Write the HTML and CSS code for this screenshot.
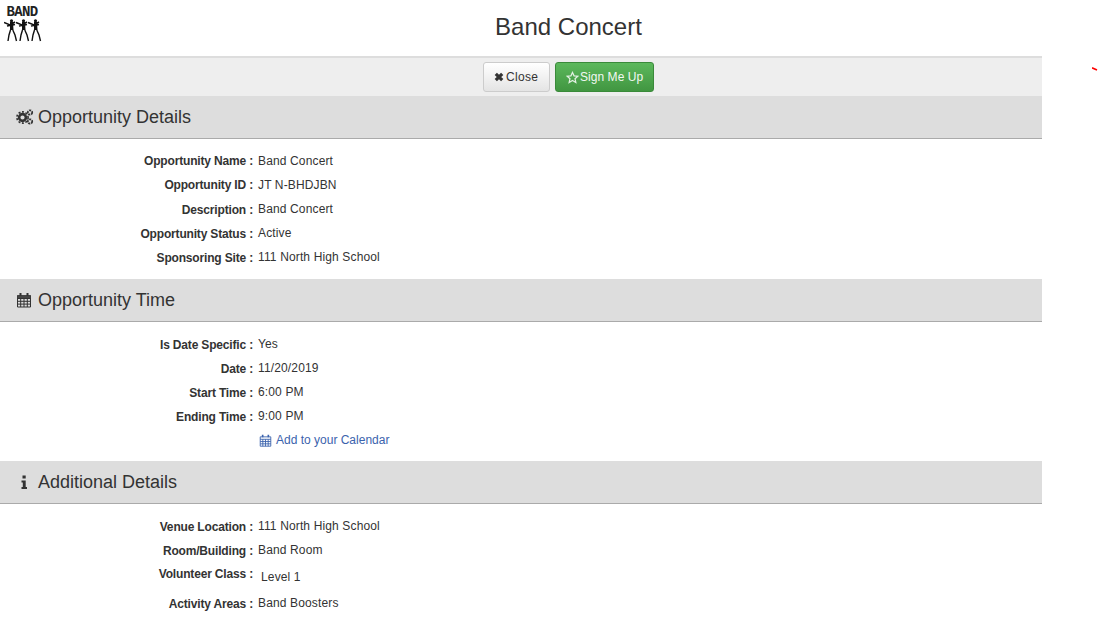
FILE: index.html
```html
<!DOCTYPE html>
<html lang="en">
<head>
    <meta charset="UTF-8">
    <title>Band Concert</title>
    <link rel="stylesheet" href="styles.css">
</head>
<body>
    <div class="page">
        <header class="top">
            <div class="logo">
                <span class="logoText">BAND</span>
                <svg class="logoFigures" width="38" height="23" viewBox="0 0 38 23">
                    <defs>
                        <g id="marcher">
                            <path d="M0 3.5 L6 6 L11 3 M3 7 L11 5.5" fill="none" stroke="#111" stroke-width="1.5"/>
                            <circle cx="7.5" cy="1.8" r="1.6" fill="#111"/>
                            <path d="M6 3 H9 L9.5 11 H6 Z" fill="#111"/>
                            <path d="M6.5 11 L5 16 L4 22 M8.8 11 L11 16 L12.5 22" fill="none" stroke="#111" stroke-width="1.4"/>
                        </g>
                    </defs>
                    <use href="#marcher" x="0"/>
                    <use href="#marcher" x="12"/>
                    <use href="#marcher" x="24"/>
                </svg>
            </div>
            <h1>Band Concert</h1>
        </header>

        <div class="toolbar">
            <button class="btn btnClose">
                <svg class="ico" width="10" height="10" viewBox="0 0 10 10"><path d="M1.8 1.8 L8.2 8.2 M8.2 1.8 L1.8 8.2" stroke="#333" stroke-width="3.2" fill="none"/></svg>Close
            </button>
            <button class="btn btnSign">
                <svg class="ico" width="13" height="13" viewBox="0 0 14 14"><path d="M7 1.5 L8.7 5.2 L12.7 5.6 L9.7 8.3 L10.6 12.3 L7 10.2 L3.4 12.3 L4.3 8.3 L1.3 5.6 L5.3 5.2 Z" fill="none" stroke="#e4f1e4" stroke-width="1.3"/></svg>Sign Me Up
            </button>
        </div>

        <section>
            <h2 class="secHead">
                <span class="secIcon">
                    <svg width="18" height="16" viewBox="0 0 18 16">
                        <circle cx="6.5" cy="8.5" r="3.4" fill="none" stroke="#333" stroke-width="2.6"/>
                        <circle cx="6.5" cy="8.5" r="5.6" fill="none" stroke="#333" stroke-width="1.6" stroke-dasharray="2 1.6"/>
                        <circle cx="14" cy="3.5" r="2.2" fill="none" stroke="#333" stroke-width="1.8" stroke-dasharray="2 .8"/>
                        <circle cx="14" cy="12.5" r="2.2" fill="none" stroke="#333" stroke-width="1.8" stroke-dasharray="2 .8"/>
                    </svg>
                </span>Opportunity Details
            </h2>
            <div class="rows rowsFirst">
                <div class="row rowTight"><span class="lbl">Opportunity Name :</span><span class="val">Band Concert</span></div>
                <div class="row rowTight"><span class="lbl">Opportunity ID :</span><span class="val">JT N-BHDJBN</span></div>
                <div class="row"><span class="lbl">Description :</span><span class="val">Band Concert</span></div>
                <div class="row"><span class="lbl">Opportunity Status :</span><span class="val">Active</span></div>
                <div class="row"><span class="lbl">Sponsoring Site :</span><span class="val">111 North High School</span></div>
            </div>
        </section>

        <section>
            <h2 class="secHead">
                <span class="secIcon">
                    <svg width="16" height="16" viewBox="0 0 16 16">
                        <path d="M1.5 3.5 H14.5 V15 H1.5 Z M1.5 6.5 H14.5 M1.5 9.3 H14.5 M1.5 12.1 H14.5 M4.7 6.5 V15 M8 6.5 V15 M11.3 6.5 V15" fill="none" stroke="#333" stroke-width="1"/>
                        <path d="M1.5 3 H14.5 V6 H1.5 Z" fill="#444"/>
                        <path d="M4.5 1 V4 M11.5 1 V4" stroke="#333" stroke-width="2"/>
                    </svg>
                </span>Opportunity Time
            </h2>
            <div class="rows">
                <div class="row"><span class="lbl">Is Date Specific :</span><span class="val">Yes</span></div>
                <div class="row"><span class="lbl">Date :</span><span class="val">11/20/2019</span></div>
                <div class="row"><span class="lbl">Start Time :</span><span class="val">6:00 PM</span></div>
                <div class="row"><span class="lbl">Ending Time :</span><span class="val">9:00 PM</span></div>
                <div class="row">
                    <span class="lbl"></span>
                    <a class="calLink" href="#">
                        <svg width="13" height="13" viewBox="0 0 16 16">
                            <path d="M1.5 3.5 H14.5 V15 H1.5 Z M1.5 6.5 H14.5 M1.5 9.3 H14.5 M1.5 12.1 H14.5 M4.7 6.5 V15 M8 6.5 V15 M11.3 6.5 V15" fill="none" stroke="#3b63ad" stroke-width="1.1"/>
                            <path d="M4.5 1 V4 M11.5 1 V4" stroke="#3b63ad" stroke-width="2"/>
                        </svg>Add to your Calendar</a>
                </div>
            </div>
        </section>

        <section>
            <h2 class="secHead">
                <span class="secIcon">
                    <svg width="16" height="16" viewBox="0 0 16 16"><path d="M6.5 1.5 H9.7 V4.5 H6.5 Z M5.5 6.5 H9.7 V13 H11 V15 H5.5 V13 H6.8 V8.5 H5.5 Z" fill="#333"/></svg>
                </span>Additional Details
            </h2>
            <div class="rows">
                <div class="row"><span class="lbl">Venue Location :</span><span class="val">111 North High School</span></div>
                <div class="row"><span class="lbl">Room/Building :</span><span class="val">Band Room</span></div>
                <div class="row rowClass rowTight"><span class="lbl">Volunteer Class :</span><span class="val valClass">Level 1</span></div>
                <div class="row"><span class="lbl">Activity Areas :</span><span class="val">Band Boosters</span></div>
            </div>
        </section>
    </div>
    <svg class="redMark" width="6" height="4" viewBox="0 0 6 4"><path d="M0 .8 L5 3" stroke="#f00" stroke-width="1.6"/></svg>
</body>
</html>
```

FILE: styles.css
```css
html, body {
    margin: 0;
    padding: 0;
    background-color: #fff;
    color: #333;
    font-family: "Liberation Sans", Arial, sans-serif;
    font-size: 12px;
    overflow: hidden;
}
.page {
    width: 1042px;
}
.top {
    height: 56px;
    border-bottom: 2px solid #ddd;
    display: flex;
    align-items: center;
    justify-content: center;
    position: relative;
}
.top h1 {
    margin: 0 0 2px 95px;
    font-size: 24px;
    font-weight: 400;
    line-height: 54px;
}
.logo {
    position: absolute;
    left: 3px;
    top: 6px;
    width: 38px;
    display: flex;
    flex-direction: column;
    align-items: center;
}
.logoText {
    font-family: "Liberation Mono", monospace;
    font-weight: 700;
    font-size: 14px;
    line-height: 12px;
    letter-spacing: -.6px;
    color: #222;
}
.logoFigures {
    display: block;
    margin: 1px 0 0 2px;
}
.toolbar {
    height: 38px;
    background-color: #eee;
    display: flex;
    justify-content: center;
    align-items: flex-start;
    gap: 5px;
    padding: 4px 0 0 95px;
    box-sizing: border-box;
}
.btn {
    height: 30px;
    padding: 0 10px;
    border-radius: 3px;
    font-family: inherit;
    font-size: 12px;
    white-space: nowrap;
    display: flex;
    align-items: center;
}
.ico {
    margin-right: 2px;
    flex: none;
}
.btnClose {
    width: 67px;
    color: #333;
    letter-spacing: .3px;
    border: 1px solid #ccc;
    background: linear-gradient(#fff, #e4e4e4);
}
.btnSign {
    width: 99px;
    color: #f2f8f2;
    letter-spacing: .05px;
    border: 1px solid #3a8a3a;
    background: linear-gradient(#5cb85c, #419641);
}
.btnSign .ico {
    margin-right: 1px;
}
.secHead {
    margin: 0;
    height: 42px;
    background-color: #ddd;
    border-bottom: 1px solid #aaa;
    font-size: 18px;
    font-weight: 400;
    line-height: 42px;
    display: flex;
    align-items: center;
    color: #333;
}
.secIcon {
    width: 38px;
    padding-left: 16px;
    box-sizing: border-box;
    display: flex;
}
.rows {
    padding: 10px 0 9px;
}
.rowsFirst {
    padding-bottom: 10px;
}
.row {
    display: flex;
    height: 24px;
    line-height: 24px;
}
.lbl {
    width: 253px;
    text-align: right;
    font-weight: 700;
    letter-spacing: -.17px;
    padding-top: 1px;
    box-sizing: border-box;
}
.rowTight .lbl {
    padding-top: 0;
}
.val {
    margin-left: 5px;
    letter-spacing: .14px;
}
.calLink {
    color: #3b63ad;
    text-decoration: none;
    display: flex;
    align-items: center;
    gap: 4px;
    margin-left: 6px;
}
.rowClass {
    height: 29px;
}
.valClass {
    margin-left: 8px;
    padding-top: 3px;
}
.redMark {
    position: absolute;
    left: 1092px;
    top: 67px;
}
```
